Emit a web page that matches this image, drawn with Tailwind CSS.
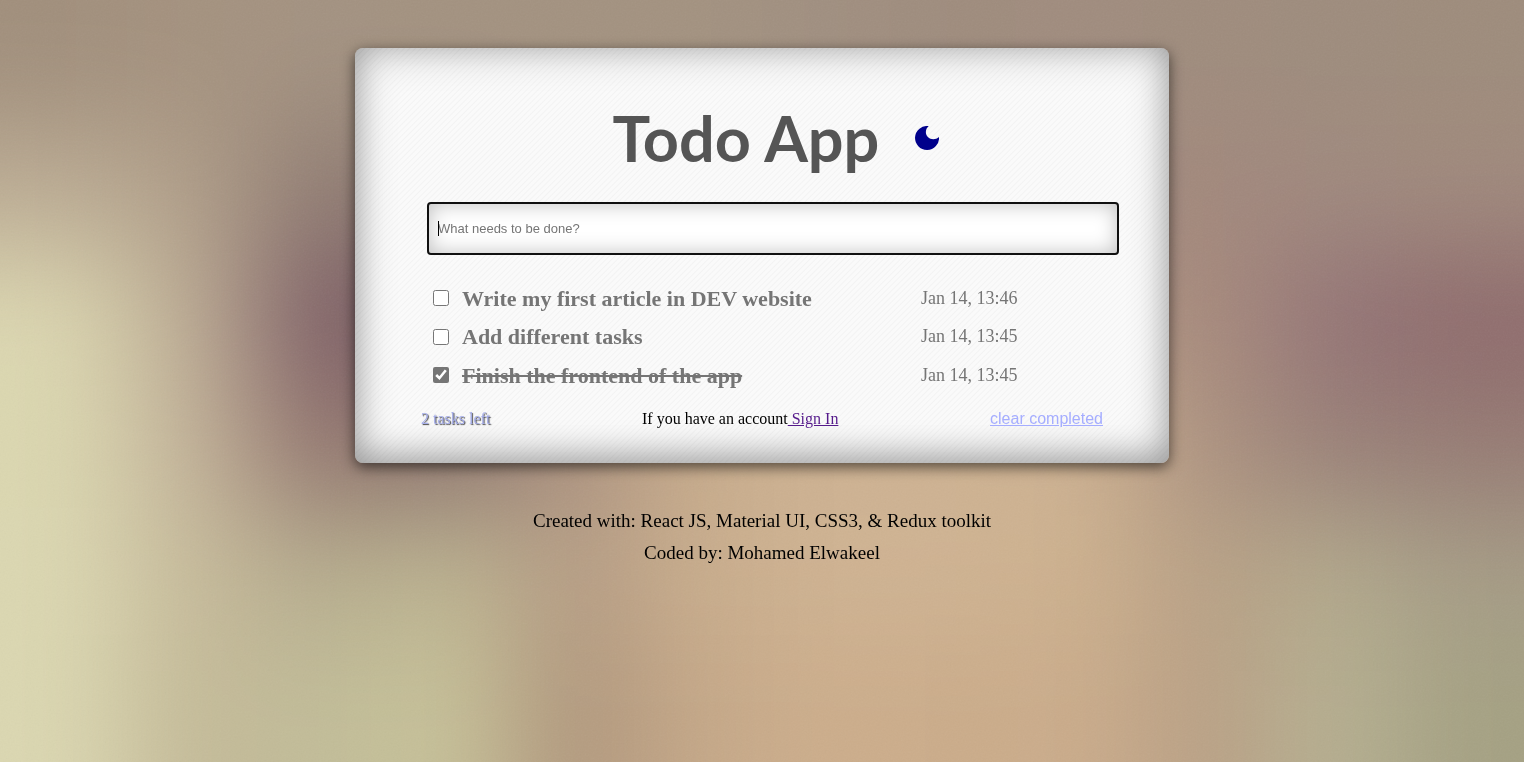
<!DOCTYPE html>
<html lang="en">
<head>
<meta charset="utf-8">
<meta name="viewport" content="width=device-width, initial-scale=1">
<title>Todo App</title>
<script src="https://cdn.jsdelivr.net/npm/@tailwindcss/browser@4"></script>
</head>
<body class="min-h-screen bg-[#ab9884] px-4 pt-12 font-['Liberation_Serif',serif] text-black">
<svg class="fixed inset-0 -z-10 h-full w-full" viewBox="0 0 1524 762" preserveAspectRatio="none" aria-hidden="true">
  <defs>
    <filter id="soft" filterUnits="userSpaceOnUse" x="-300" y="-300" width="2124" height="1362" color-interpolation-filters="sRGB"><feGaussianBlur stdDeviation="54"/></filter>
    <filter id="grain" x="0" y="0" width="100%" height="100%"><feTurbulence type="fractalNoise" baseFrequency="0.6" numOctaves="2"/><feColorMatrix type="saturate" values="0"/></filter>
  </defs>
  <g id="mesh" filter="url(#soft)"></g>
  <rect width="1524" height="762" filter="url(#grain)" opacity="0.06"/>
</svg>
<main class="mx-auto w-full max-w-[814px] rounded-lg bg-[repeating-linear-gradient(135deg,#fafafa_0px,#fafafa_2px,#f3f3f3_3px,#fafafa_4px)] px-16 pt-[50px] pb-8 shadow-[0_4px_14px_rgba(0,0,0,0.6),inset_0_0_40px_rgba(0,0,0,0.3),inset_0_-10px_30px_rgba(0,0,0,0.16)]">
  <header class="flex items-center justify-center gap-6 pl-10">
    <h1 class="font-['Lato',sans-serif] text-[63px] leading-[80px] font-bold text-[#555]">Todo App</h1>
    <button type="button" aria-label="Toggle dark mode" class="p-3">
      <svg class="size-6" viewBox="0 0 24 24" fill="#00008b" aria-hidden="true"><path d="M13.7 0.1A12 12 0 1 0 24 11C20.5 14.2 15.6 13.8 12.9 11C10.2 8.2 9.9 3.5 13.7 0.1Z"/></svg>
    </button>
  </header>
  <form class="mt-6 -mr-[14px] pl-2">
    <div class="relative">
      <input type="text" aria-label="New task" placeholder="What needs to be done?" autofocus class="block h-[53px] w-full rounded-sm border-2 border-[#101010] bg-white px-[9px] font-['Liberation_Sans',sans-serif] text-[13px] text-black caret-transparent shadow-[inset_0_0_20px_rgba(0,0,0,0.25)] outline-none placeholder:text-[#757575]">
      <span class="pointer-events-none absolute top-[19px] left-[11px] h-[15px] w-px bg-black" aria-hidden="true"></span>
    </div>
  </form>
  <ul class="mt-6 pl-[14px] text-[#757575]">
    <li class="flex h-[38px] items-center">
      <input id="t1" type="checkbox" class="size-4 accent-[#757575]">
      <label for="t1" class="ml-[13px] flex-1 text-[22px] font-bold">Write my first article in DEV website</label>
      <time class="w-[184px] text-[18px]">Jan 14, 13:46</time>
    </li>
    <li class="flex h-[39px] items-center">
      <input id="t2" type="checkbox" class="size-4 accent-[#757575]">
      <label for="t2" class="ml-[13px] flex-1 text-[22px] font-bold">Add different tasks</label>
      <time class="w-[184px] text-[18px]">Jan 14, 13:45</time>
    </li>
    <li class="flex h-[38px] items-center">
      <input id="t3" type="checkbox" checked class="size-4 accent-[#757575]">
      <label for="t3" class="ml-[13px] flex-1 text-[22px] font-bold line-through">Finish the frontend of the app</label>
      <time class="w-[184px] text-[18px]">Jan 14, 13:45</time>
    </li>
  </ul>
  <div class="mt-[13px] flex items-center justify-between px-[2px] text-base">
    <span class="text-[#a5adea] [text-shadow:1px_1px_1px_#444]">2 tasks left</span>
    <p>If you have an account<a href="#" class="text-[#551a8b] underline"> Sign In</a></p>
    <button type="button" class="font-['Liberation_Sans',sans-serif] text-[#a5adff] underline">clear completed</button>
  </div>
</main>
<footer class="mt-[42px] text-center text-[19px] leading-8">
  <p>Created with: React JS, Material UI, CSS3, &amp; Redux toolkit</p>
  <p>Coded by: Mohamed Elwakeel</p>
</footer>
<script>
  // Blurred colour mesh for the page backdrop: 12 columns by 6 rows.
  const rows = [
    'a18f7c a5927f a39281 a39280 a39280 a39280 a08f80 9f8c7d a08c7e 9f8c7d 9e8c7d 9e8c7c',
    'bcac94 b09e89 917d73 8d7a72 a39280 a39280 a08f80 9f8c7d a08c7e a2877c a0897e a0897d',
    'dcd7b1 bcab93 7f6067 785a62 a08a7e b09a84 b09a84 b09a84 ac9280 a88b7d 937376 8e6a6c',
    'dbd7b0 c3b399 93766f 8d756f ab917f c8ac8c ceb292 ceb292 ceb292 ac9280 998078 967b74',
    'dbd7b1 c7bb9b b5ab8d bcb390 b59d85 c9ad8c cfb392 cfb392 cdb18e b8a085 b2a98c a69c86',
    'dbd7b1 c4ba98 c1bc98 c7c299 b0977d c5a888 cdae8c cbac8a cbac8b b9a085 b6b091 a5a183'
  ];
  const mesh = document.getElementById('mesh');
  rows.forEach((row, r) => row.split(' ').forEach((hex, c) => {
    const rect = document.createElementNS('http://www.w3.org/2000/svg', 'rect');
    const x = c === 0 ? -300 : c * 127, y = r === 0 ? -300 : r * 127;
    rect.setAttribute('x', x);
    rect.setAttribute('y', y);
    rect.setAttribute('width', (c === 11 ? 1824 : (c + 1) * 127 + 1) - x);
    rect.setAttribute('height', (r === 5 ? 1062 : (r + 1) * 127 + 1) - y);
    rect.setAttribute('fill', '#' + hex);
    mesh.appendChild(rect);
  }));
</script>
</body>
</html>
